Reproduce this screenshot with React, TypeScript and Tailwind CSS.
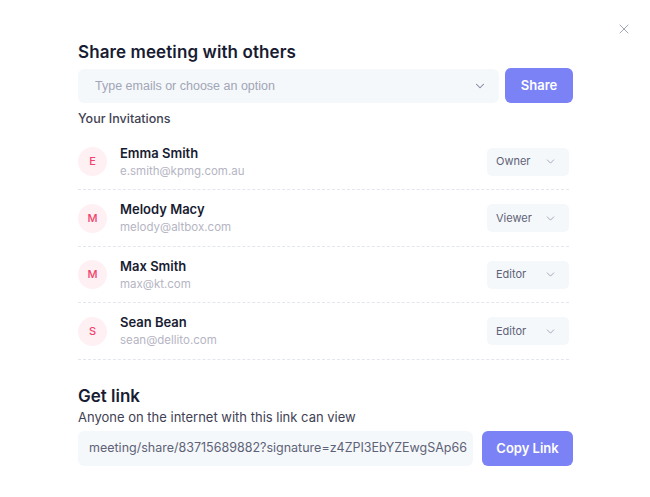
import { ChevronDown, X } from 'lucide-react';

const invitations = [
  { initial: 'E', name: 'Emma Smith', email: 'e.smith@kpmg.com.au', role: 'Owner' },
  { initial: 'M', name: 'Melody Macy', email: 'melody@altbox.com', role: 'Viewer' },
  { initial: 'M', name: 'Max Smith', email: 'max@kt.com', role: 'Editor' },
  { initial: 'S', name: 'Sean Bean', email: 'sean@dellito.com', role: 'Editor' },
];

export default function App() {
  return (
    <div className="min-h-screen bg-white font-['Inter',sans-serif] relative">
      {/* Close */}
      <button className="absolute top-[21px] right-[18px] text-[#a1a5b7]">
        <X className="w-4 h-4" strokeWidth={1.5} />
      </button>

      <div className="w-[495px] ml-[78px] pt-[41px]">
        <h2 className="text-[17px] leading-[22px] font-semibold text-[#181c32] tracking-[0.1px]">
          Share meeting with others
        </h2>

        <div className="flex gap-[6px] mt-[6px]">
          <div className="flex-1 h-[34px] bg-[#f5f8fa] rounded-[6px] flex items-center justify-between pl-[17px] pr-[12px]">
            <span className="text-[12.5px] text-[#a1a5b7] font-['Liberation_Sans',sans-serif]">
              Type emails or choose an option
            </span>
            <ChevronDown className="w-[14px] h-[14px] text-[#7e8299]" strokeWidth={1.75} />
          </div>
          <button className="w-[68px] h-[35px] -mt-[1px] rounded-[6px] bg-[#7a82f6] text-white text-[13px] font-semibold">
            Share
          </button>
        </div>

        <div className="mt-[7px] text-[12.5px] font-medium text-[#3f4254]">Your Invitations</div>

        <div className="mt-[5px] pr-[4px]">
          {invitations.map((inv) => (
            <div
              key={inv.name}
              className="flex items-center justify-between h-[56.5px] border-b border-dashed border-[#e4e6ef]"
            >
              <div className="flex items-center">
                <div className="w-[29px] h-[29px] rounded-full bg-[#fff0f4] flex items-center justify-center text-[11px] font-medium text-[#f1416c]">
                  {inv.initial}
                </div>
                <div className="ml-[13px] flex flex-col">
                  <span className="text-[13px] leading-[17px] font-semibold text-[#181c32]">{inv.name}</span>
                  <span className="text-[11.5px] leading-[16px] text-[#b5b5c3] mt-[1px]">{inv.email}</span>
                </div>
              </div>
              <div className="w-[82px] h-[28px] bg-[#f5f8fa] rounded-[5px] flex items-center justify-between pl-[9px] pr-[12px]">
                <span className="text-[11px] text-[#5e6278]">{inv.role}</span>
                <ChevronDown className="w-[13px] h-[13px] text-[#a1a5b7]" strokeWidth={1.75} />
              </div>
            </div>
          ))}
        </div>

        <h3 className="mt-[25px] text-[17px] leading-[22px] font-semibold text-[#181c32]">Get link</h3>
        <div className="mt-[1px] text-[13px] text-[#3f4254]">Anyone on the internet with this link can view</div>

        <div className="flex gap-[9px] mt-[4px]">
          <div className="flex-1 h-[35px] bg-[#f5f8fa] rounded-[6px] flex items-center pl-[11px] overflow-hidden">
            <span className="text-[12.5px] text-[#5e6278] whitespace-nowrap">
              meeting/share/83715689882?signature=z4ZPI3EbYZEwgSAp66
            </span>
          </div>
          <button className="w-[91px] h-[35px] rounded-[6px] bg-[#7a82f6] text-white text-[13px] font-semibold">
            Copy Link
          </button>
        </div>
      </div>
    </div>
  );
}
